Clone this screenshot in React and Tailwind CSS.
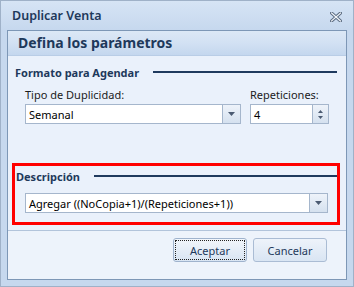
const font = { fontFamily: '"Noto Sans", "Open Sans", sans-serif' };

function ArrowDown() {
  return (
    <svg width="7" height="4" viewBox="0 0 7 4">
      <path d="M0 0h7L3.5 4z" fill="#4b5b72" />
    </svg>
  );
}

function Combo({ value, className }) {
  return (
    <div className={`flex h-[20px] border border-[#a5b6cc] bg-white ${className}`}>
      <div className="flex-1 flex items-center pl-[3px] text-[11px] text-black leading-none">{value}</div>
      <div className="w-[18px] flex items-center justify-center border-l border-[#a5b6cc] bg-gradient-to-b from-[#eef3fa] to-[#d5e1ef]">
        <ArrowDown />
      </div>
    </div>
  );
}

function SectionTitle({ children, className }) {
  return (
    <div className={`flex items-center gap-[14px] h-[16px] ${className}`}>
      <span className="text-[11px] font-bold text-[#1e395b] leading-none whitespace-nowrap">{children}</span>
      <div className="flex-1 h-[2px] bg-[#1f3a5e]" />
    </div>
  );
}

function CloseIcon() {
  return (
    <svg width="12" height="10" viewBox="0 0 12 10">
      <path d="M1.5 1l9 8M10.5 1l-9 8" stroke="#5b6c82" strokeWidth="3.2" strokeLinecap="square" />
      <path d="M1.5 1l9 8M10.5 1l-9 8" stroke="#f4f7fb" strokeWidth="1.2" strokeLinecap="square" />
    </svg>
  );
}

export default function App() {
  return (
    <div style={font} className="w-[354px] h-[287px] bg-[#c6d8ee] border border-[#9fb1c8] flex flex-col overflow-hidden">
      <div className="h-[29px] shrink-0 flex items-center justify-between pl-[11px] pr-[11px] pt-[2px] bg-gradient-to-b from-[#d6e4f5] to-[#c6d8ee]">
        <span className="text-[12.5px] font-semibold text-[#1e395b] leading-none">Duplicar Venta</span>
        <CloseIcon />
      </div>
      <div className="mx-[6px] mb-[6px] flex-1 border border-[#7d97b6] bg-[#eaf1fb] flex flex-col">
        <div className="h-[25px] shrink-0 flex items-center pl-[10px] bg-gradient-to-b from-[#dce8f6] via-[#d2e1f3] to-[#c4d7ee] border-b border-[#b9cde6]">
          <span className="text-[14px] font-bold text-[#1e395b] leading-none">Defina los parámetros</span>
        </div>
        <div className="flex flex-col pt-[8px]">
          <SectionTitle className="pl-[7px] pr-[9px]">Formato para Agendar</SectionTitle>
          <div className="flex gap-[9px] pl-[17px] mt-[7px]">
            <div className="w-[216px] flex flex-col">
              <span className="text-[11px] text-[#1b1b1b] leading-none h-[14px] flex items-center">Tipo de Duplicidad:</span>
              <Combo value="Semanal" className="mt-[3px]" />
            </div>
            <div className="w-[79px] flex flex-col">
              <span className="text-[11px] text-[#1b1b1b] leading-none h-[14px] flex items-center">Repeticiones:</span>
              <div className="flex h-[20px] border border-[#a5b6cc] bg-white mt-[3px]">
                <div className="flex-1 flex items-center pl-[3px] text-[11px] text-black leading-none">4</div>
                <div className="w-[16px] flex flex-col items-center justify-center gap-[3px] border-l border-[#a5b6cc] bg-gradient-to-b from-[#eef3fa] to-[#d5e1ef]">
                  <svg width="5" height="3" viewBox="0 0 5 3"><path d="M0 3h5L2.5 0z" fill="#4b5b72" /></svg>
                  <svg width="5" height="3" viewBox="0 0 5 3"><path d="M0 0h5L2.5 3z" fill="#4b5b72" /></svg>
                </div>
              </div>
            </div>
          </div>
          <div className="mt-[39px] ml-[4px] mr-[6px] border-[3px] border-[#ff0000] h-[62px] flex flex-col pt-[2px]">
            <SectionTitle className="pl-[1px] pr-[0px]">Descripción</SectionTitle>
            <Combo value="Agregar ((NoCopia+1)/(Repeticiones+1))" className="ml-[10px] mr-[9px] mt-[9px]" />
          </div>
        </div>
        <div className="mt-[5px] border-t border-[#b2c4db] bg-[#edf3fb] flex-1 flex justify-end gap-[6px] pr-[19px] pt-[7px]">
          <button className="w-[74px] h-[24px] rounded-[3px] border border-[#9fb3cd] bg-gradient-to-b from-[#f2f6fb] to-[#d9e5f3] p-[1px]">
            <div className="w-full h-full border border-dotted border-[#222] flex items-center justify-center text-[11px] text-[#1e395b] leading-none">Aceptar</div>
          </button>
          <button className="w-[74px] h-[24px] rounded-[3px] border border-[#aabcd4] bg-gradient-to-b from-[#eef3fa] to-[#d9e5f3] flex items-center justify-center text-[11px] text-[#1e395b] leading-none">
            Cancelar
          </button>
        </div>
      </div>
    </div>
  );
}
